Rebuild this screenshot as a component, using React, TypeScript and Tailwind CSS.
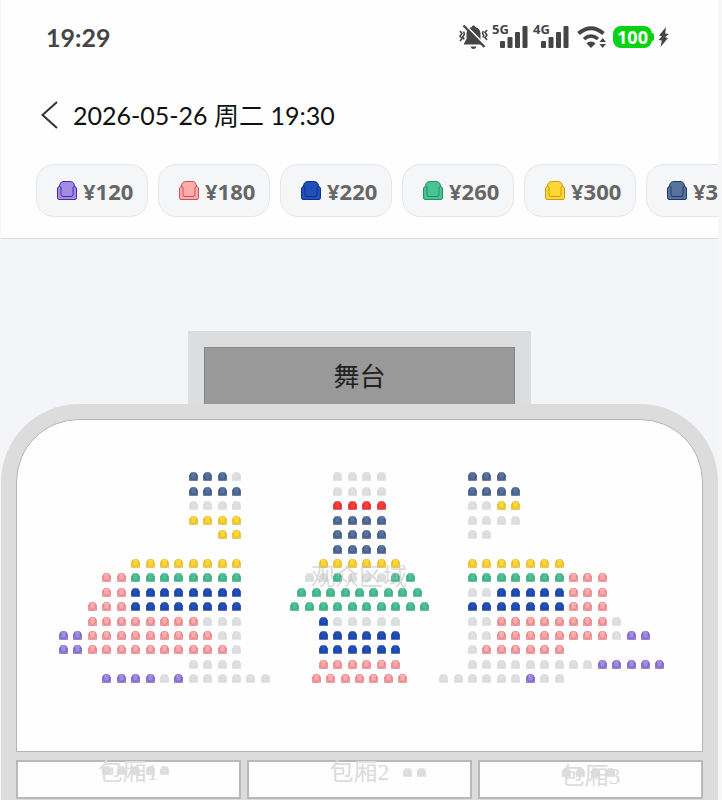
import React from "react";

type Tone = "V" | "P" | "B" | "G" | "Y" | "N" | "R" | "x";

const TONES: Record<Tone, { fill: string; stroke: string; label: string }> = {
  V: { fill: "#a28be4", stroke: "#4a2fa3", label: "¥120" },
  P: { fill: "#ffacac", stroke: "#c8505c", label: "¥180" },
  B: { fill: "#2150b8", stroke: "#0d2f86", label: "¥220" },
  G: { fill: "#49c294", stroke: "#2c8f69", label: "¥260" },
  Y: { fill: "#fdd835", stroke: "#c99b1c", label: "¥300" },
  N: { fill: "#56739f", stroke: "#22385f", label: "¥340" },
  R: { fill: "#ff3b3b", stroke: "#b81c22", label: "¥380" },
  x: { fill: "#dedfe1", stroke: "#d4d5d8", label: "已售" },
};

const PRICES: Tone[] = ["V", "P", "B", "G", "Y", "N"];

const PITCH = 14.42;

/* Each row: [row index, first column, seats]. */
type Row = [number, number, string];
type Block = { left: number; name: string; rows: Row[] };

const BLOCKS: Block[] = [
  {
    left: 42,
    name: "左区",
    rows: [
      [0, 9, "NNNx"],
      [1, 9, "NNNN"],
      [2, 9, "xxxx"],
      [3, 9, "YYYY"],
      [4, 11, "YY"],
      [6, 5, "YYYYYYYY"],
      [7, 3, "PPGGGGGGGG"],
      [8, 3, "PPBBBBBBBB"],
      [9, 2, "PPPBBBBBBBB"],
      [10, 2, "PPPPPPPPxxx"],
      [11, 0, "VVPPPPPPPPPxx"],
      [12, 0, "VVPPPPPPPPPPx"],
      [13, 9, "xxxx"],
      [14, 3, "VVVVxVxxxxxx"],
    ],
  },
  {
    left: 302,
    name: "中区",
    rows: [
      [0, 1, "xxxx"],
      [1, 1, "xxxx"],
      [2, 1, "RRRR"],
      [3, 1, "NNNN"],
      [4, 1, "NNNN"],
      [5, 1, "NNNN"],
      [6, 0, "YYYYYY"],
      [7, -1, "xxGxxxGG"],
      [8, -1.5, "GGGGGGGGG"],
      [9, -2, "GGGGGGGGGG"],
      [10, 0, "Bxxxxx"],
      [11, 0, "BBBBBB"],
      [12, 0, "BBBBBB"],
      [13, 0, "PPPPPP"],
      [14, -0.5, "PPPPPPP"],
    ],
  },
  {
    left: 451,
    name: "右区",
    rows: [
      [0, 0, "NNN"],
      [1, 0, "NNNN"],
      [2, 0, "xxYY"],
      [3, 0, "xxxx"],
      [4, 0, "xx"],
      [6, 0, "YYYYYYY"],
      [7, 0, "GGGGGGGPPP"],
      [8, 0, "xxBBBBBPPP"],
      [9, 0, "BBBBBBBPPP"],
      [10, 0, "xxPPPPPPPPx"],
      [11, 0, "xxPPPPPPPPxVV"],
      [12, 0, "xPPPPPP"],
      [13, 0, "xxxxxxxxxVVVVV"],
      [14, -2, "xxxxxxVxx"],
    ],
  },
];

function SeatIcon({ tone, className }: { tone: Tone; className: string }) {
  const { fill, stroke } = TONES[tone];
  return (
    <svg viewBox="0 0 20 19" className={className} fill={fill} stroke={stroke} strokeWidth="1" aria-hidden="true">
      <path d="M2.500 16V5Q3 .5 7 .5h6q4 0 4.500 4.500v11z" />
      <path d="M2 5.500h1q1 .2 1 1.500v6.500q0 2 2 2h8q2 0 2-2V7q0-1.300 1-1.500h1q1.500.5 1.500 2.500v8.500q0 2-1.500 2H2q-1.500 0-1.500-2V8q0-2 1.500-2.500z" />
    </svg>
  );
}

function Seat({ tone, left, top, name }: { tone: Tone; left: number; top: number; name: string }) {
  return (
    <button
      type="button"
      aria-label={name}
      disabled={tone === "x"}
      className="absolute block"
      style={{ left, top }}
    >
      <SeatIcon tone={tone} className="block h-[9px] w-[9px]" />
    </button>
  );
}

function Signal({ label }: { label: string }) {
  return (
    <div className="relative h-6 w-9 text-[#454545]">
      <span className="absolute top-0 left-0 font-['Open_Sans'] text-[13px] leading-[10px] font-bold">{label}</span>
      <svg viewBox="0 0 28 22" className="absolute right-0 bottom-0 h-[22px] w-7" fill="currentColor" aria-hidden="true">
        <rect x="0" y="15" width="5" height="7" rx="1" />
        <rect x="7.500" y="11" width="5" height="11" rx="1" />
        <rect x="15" y="6" width="5" height="16" rx="1" />
        <rect x="22.500" y="0" width="5" height="22" rx="1" />
      </svg>
    </div>
  );
}

function StatusBar() {
  return (
    <div className="flex h-[74px] items-center justify-between pr-[49px] pl-[45px] text-[#454545]">
      <time className="font-['Lato'] text-[25px] leading-8 font-bold">19:29</time>
      <div className="flex items-center">
        <svg viewBox="0 0 29 26" className="mr-1 h-[26px] w-[29px]" fill="currentColor" aria-hidden="true">
          <path d="M14.500 1.500c.9 0 1.600.6 1.800 1.500 3.500.8 5.200 3.500 5.200 7v5l2.500 4.500v1H5v-1L7.500 15v-5c0-3.500 1.700-6.200 5.200-7 .2-.9.900-1.500 1.800-1.500z" />
          <path d="M11.500 22.500h6q-.8 2.500-3 2.500t-3-2.500z" />
          <path d="M6.500 1.500l20 20.500" stroke="#fefefe" strokeWidth="2.500" />
          <path d="M4.500 1.500l21 21.500" stroke="currentColor" strokeWidth="2.400" />
          <path d="M1 7l2 2.500-2 2.500 2 2.500-2 2.500M4.500 7.500l1 2.500-1.500 2.500 1 3M28 6l-2 2.500 2 2.500-2 2.500 2 2.500M24.500 7l-1 2 1.200 2.500-.7 2" fill="none" stroke="currentColor" strokeWidth="1.600" />
        </svg>
        <div className="flex gap-[5px] pb-0.5">
          <Signal label="5G" />
          <Signal label="4G" />
        </div>
        <svg viewBox="0 0 30 22" className="ml-2 h-[22px] w-[30px]" fill="none" stroke="currentColor" aria-hidden="true">
          <path d="M1.500 7.500Q14 -3 26.500 7.500" strokeWidth="4" />
          <path d="M7 13Q14 7 21 13" strokeWidth="3.500" />
          <path d="M14 15.500q3 0 4.500 2L14 22l-4.500-4.500q1.500-2 4.500-2z" fill="currentColor" stroke="none" />
          <path d="M22.500 16l3.200-4 3.200 4zM22.500 18h6.400l-3.200 4z" fill="currentColor" stroke="none" />
        </svg>
        <div className="ml-1.5 flex items-center">
          <span className="flex h-[22px] w-[39px] items-center justify-center rounded-lg bg-[#07d312] font-['Open_Sans'] text-[18px] leading-5 font-bold text-white">
            100
          </span>
          <span className="h-2 w-0.5 rounded-r-sm bg-[#07d312]" />
        </div>
        <svg viewBox="0 0 11 20" className="ml-1 h-5 w-[11px]" fill="currentColor" aria-hidden="true">
          <path d="M8 0L1 8.500l3 .8L.5 13l3.300.6L2.500 20l7.500-9-3-.8L10.800 7l-3.600-.6z" />
        </svg>
      </div>
    </div>
  );
}

function BoxRoom({ name, children, drop }: { name: string; children?: React.ReactNode; drop?: boolean }) {
  return (
    <div className="relative flex h-[39px] flex-1 justify-center border-2 border-[#b9b9b9] bg-[#fefefe]">
      {children}
      <span
        className={
          "pointer-events-none relative font-['Liberation_Serif','Noto_Sans_CJK_SC',serif] text-2xl leading-5 font-normal text-[#dcdcdc] " +
          (drop ? "pt-1" : "")
        }
      >
        {name}
      </span>
    </div>
  );
}

export default function App() {
  return (
    <div className="overflow-hidden bg-[#f6f6f7] pr-1 pl-px font-['Noto_Sans','Noto_Sans_CJK_SC',sans-serif]">
      <header className="border-b border-[#dcdddf] bg-[#fefefe]">
        <StatusBar />
        <div className="flex h-[82px] items-center pl-10">
          <button type="button" aria-label="返回" className="mr-[15px]">
            <svg viewBox="0 0 17 28" className="block h-7 w-[17px]" fill="none" stroke="#333" strokeWidth="2" aria-hidden="true">
              <path d="M16 1L1.500 14 16 27" />
            </svg>
          </button>
          <h1 className="font-['Lato','Noto_Sans_CJK_SC',sans-serif] text-[25px] leading-9 font-normal whitespace-nowrap text-[#111]">
            2026-05-26 周二 19:30
          </h1>
        </div>
        <div className="flex gap-2.5 overflow-hidden pt-2 pb-[21px] pl-[35px]">
          {PRICES.map((tone) => (
            <button
              key={tone}
              type="button"
              className="flex h-[53px] w-28 shrink-0 items-center rounded-[18px] border border-[#e4e6ea] bg-[#f5f6f8] pl-5"
            >
              <SeatIcon tone={tone} className="mr-1.5 h-[19px] w-5" />
              <span className="font-['Noto_Sans'] text-[22px] leading-7 font-bold text-[#666]">{TONES[tone].label}</span>
            </button>
          ))}
        </div>
      </header>

      <main className="bg-[#f4f5f8] pt-[92px]">
        <div className="mx-auto w-[343px] bg-[#dcdddf] px-4 pt-4">
          <div className="flex h-[57px] items-center justify-center border border-b-0 border-[#858585] bg-[#999] text-[26px] leading-8 text-[#222]">
            舞台
          </div>
        </div>
        <section className="rounded-t-[78px] bg-[#dcdcdc] px-[15px] pt-[15px] pb-px">
          <div className="rounded-t-[63px] border border-[#b4b4b4] bg-[#fefefe]">
            <div className="relative mx-auto h-[331px] w-[685px]">
              {BLOCKS.map((block) =>
                block.rows.map(([row, col, seats]) =>
                  seats.split("").map((s, i) => (
                    <Seat
                      key={block.name + row + "-" + i}
                      tone={s as Tone}
                      left={Math.round(block.left + (col + i) * PITCH)}
                      top={Math.round(52.4 + row * PITCH)}
                      name={`${block.name} ${row + 1}排 ${i + 1}座 ${TONES[s as Tone].label}`}
                    />
                  )),
                ),
              )}
              <span className="pointer-events-none absolute top-[140px] left-[294px] text-2xl leading-8 font-normal whitespace-nowrap text-[#bbb]/50">
                观众区域
              </span>
            </div>
          </div>
          <div className="mt-2 flex gap-1.5">
            <BoxRoom name="包厢1">
              {[84, 99, 113, 128, 142].map((x, i) => (
                <Seat key={x} tone="x" left={x} top={4} name={`包厢1 ${i + 1}座`} />
              ))}
            </BoxRoom>
            <BoxRoom name="包厢2">
              {[154, 168].map((x, i) => (
                <Seat key={x} tone="x" left={x} top={6} name={`包厢2 ${i + 1}座`} />
              ))}
            </BoxRoom>
            <BoxRoom name="包厢3" drop>
              {[82, 96, 111, 126].map((x, i) => (
                <Seat key={x} tone="x" left={x} top={6} name={`包厢3 ${i + 1}座`} />
              ))}
            </BoxRoom>
          </div>
        </section>
      </main>
    </div>
  );
}
